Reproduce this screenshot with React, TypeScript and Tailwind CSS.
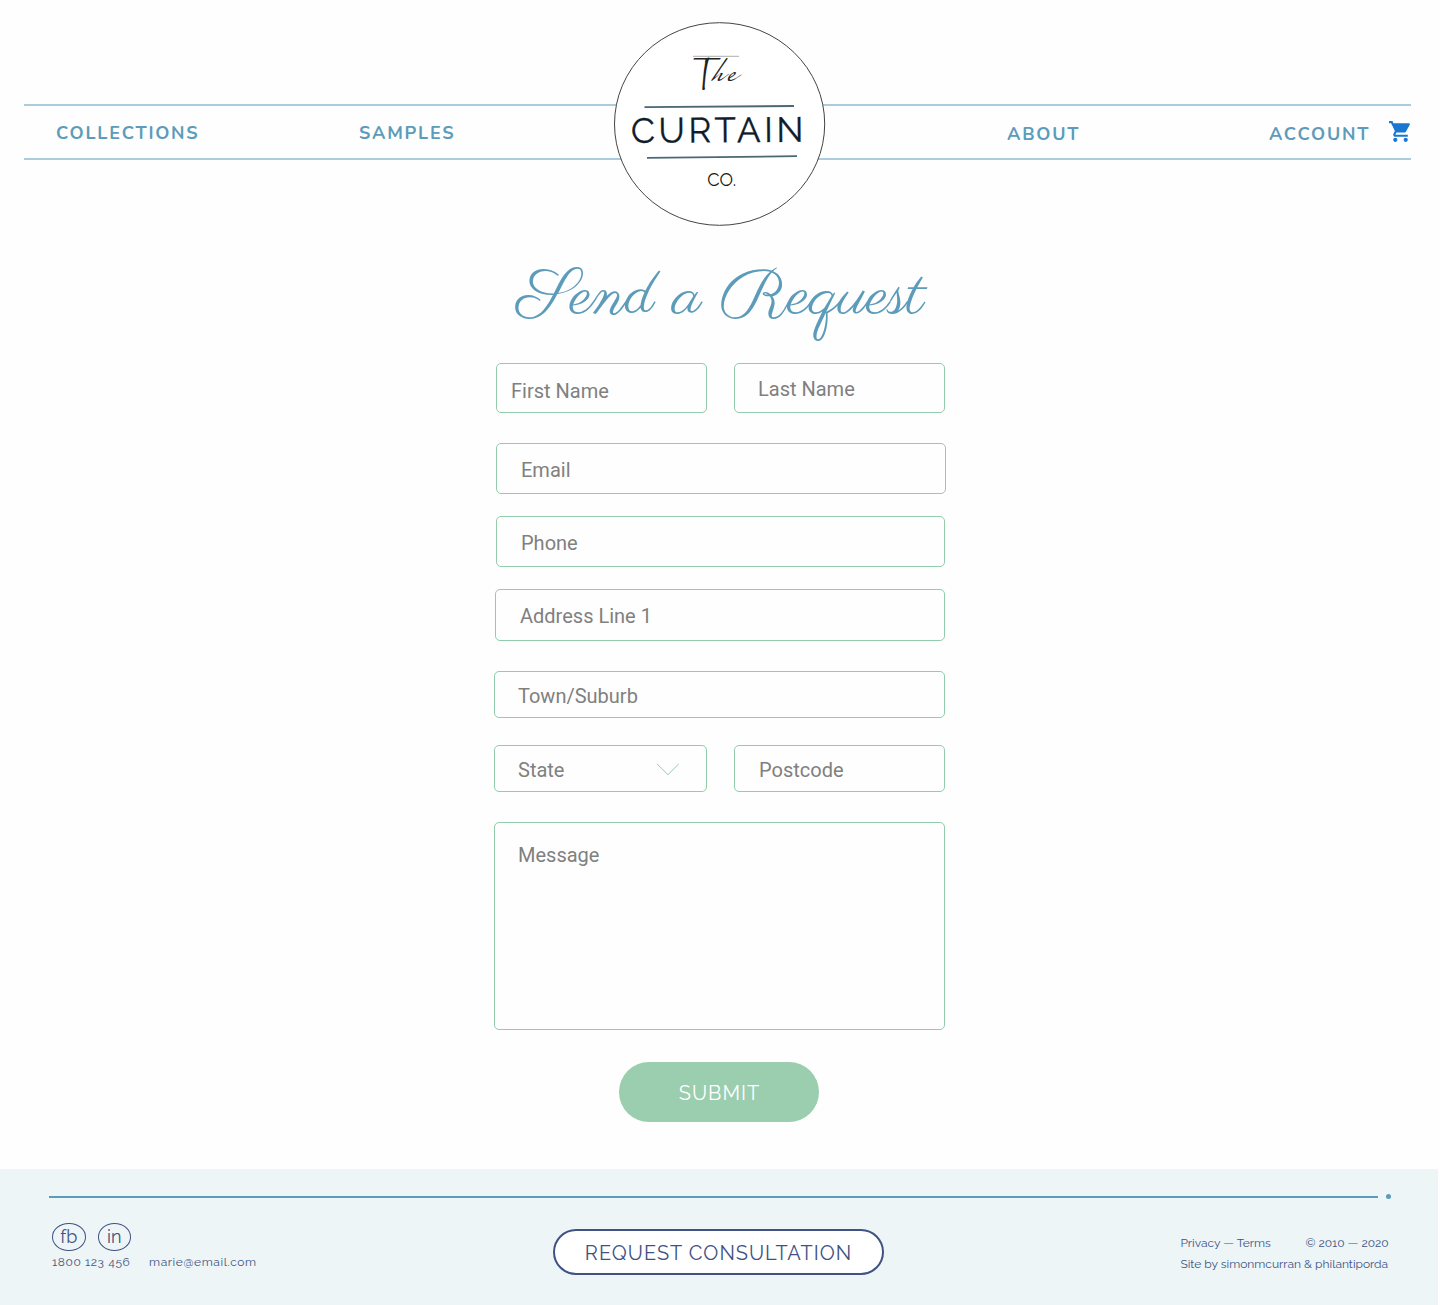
import React from "react";
import { MdShoppingCart } from "react-icons/md";

const fieldBase =
  "block rounded-[5px] border border-[#93ccaa] bg-transparent font-[Roboto,sans-serif] text-[20px] leading-[24px] text-[#808080] placeholder:text-[#808080] placeholder:opacity-100 outline-none";

function Field({ label, className }: { label: string; className: string }) {
  return <input type="text" placeholder={label} aria-label={label} className={`${fieldBase} ${className}`} />;
}

function Logo() {
  return (
    <svg width="214" height="206" viewBox="613 21 214 206" className="absolute left-[613px] top-[21px]">
      <ellipse cx="719.6" cy="124" rx="105.1" ry="101.3" fill="#fff" stroke="#444" strokeWidth="1" />
      <text x="692" y="89.5" fontFamily="Bilbo, Lato, cursive" fontSize="48" fill="#222">
        T
        <tspan x="711" y="80.5" fontFamily="'Mrs Saint Delafield', Lato, cursive" fontSize="40" letterSpacing="2">
          he
        </tspan>
      </text>
      <path d="M693 56.3H739" stroke="#777" strokeWidth="0.6" fill="none" />
      <path d="M644.5 107.2L794 106" stroke="#4b6873" strokeWidth="1.8" fill="none" />
      <path d="M647 157.8L797 156.2" stroke="#4b6873" strokeWidth="1.8" fill="none" />
      <text
        x="631"
        y="142.3"
        transform="rotate(-0.4 717 143)"
        fontFamily="Raleway, Lato, sans-serif"
        fontSize="35"
        fill="#101c2c"
        stroke="#101c2c"
        strokeWidth="0.3"
        textLength="172.5"
        lengthAdjust="spacing"
      >
        CURTAIN
      </text>
      <text x="707.3" y="185.5" fontFamily="Raleway, Lato, sans-serif" fontSize="18" fill="#1a1a1a">
        CO.
      </text>
    </svg>
  );
}

function Header() {
  return (
    <header className="relative h-[250px] pt-[104px]">
      <nav className="ml-6 flex h-14 w-[1387px] items-center border-y-2 border-[#a9cddc] pl-8 font-[Nunito,Lato,sans-serif] text-[18px] leading-[18px] font-bold tracking-[1.75px] text-[#5c9cba]">
        <a className="w-[303px] shrink-0 pt-0.5">COLLECTIONS</a>
        <a className="w-[648px] shrink-0 pt-0.5">SAMPLES</a>
        <a className="w-[262px] shrink-0 pt-1">ABOUT</a>
        <a className="w-[119px] shrink-0 pt-1">ACCOUNT</a>
        <MdShoppingCart className="-mr-2 mb-px -ml-[0.5px] size-[25px] shrink-0 text-[#1976d2]" />
      </nav>
      <Logo />
    </header>
  );
}

function Heading() {
  return (
    <h1 className="h-[113px] pl-[517px] font-['Parisienne','Liberation_Serif',serif] text-[64px] leading-[97px] whitespace-nowrap text-[#5c9cba]">
      Send a Request
    </h1>
  );
}

function RequestForm() {
  return (
    <form className="flex flex-col pl-[494px]">
      <div className="flex gap-[27px] pl-0.5">
        <Field label="First Name" className="h-[50px] w-[211px] pt-[6px] pl-[14px]" />
        <Field label="Last Name" className="h-[50px] w-[211px] pt-[2px] pl-[23px]" />
      </div>
      <Field label="Email" className="mt-[30px] ml-0.5 h-[51px] w-[450px] pt-[3px] pl-[24px]" />
      <Field label="Phone" className="mt-[22px] ml-0.5 h-[51px] w-[449px] pt-[3px] pl-[24px]" />
      <Field label="Address Line 1" className="mt-[22px] ml-px h-[52px] w-[450px] pt-[2px] pl-[24px]" />
      <Field label="Town/Suburb" className="mt-[30px] h-[47px] w-[451px] pt-[3px] pl-[23px]" />
      <div className="mt-[27px] flex gap-[27px]">
        <button type="button" className={`${fieldBase} flex! h-[47px] w-[213px] items-center justify-between pt-[3px] pr-[26px] pl-[23px]`}>
          State
          <svg width="23" height="13" viewBox="0 0 23 13" fill="none" stroke="#93ccaa" className="mb-px">
            <path d="M0.2 1L10.9 11.7L21.7 1" />
          </svg>
        </button>
        <Field label="Postcode" className="h-[47px] w-[211px] pt-[3px] pl-[24px]" />
      </div>
      <textarea
        placeholder="Message"
        aria-label="Message"
        className={`${fieldBase} mt-[30px] h-[208px] w-[451px] resize-none pt-[20px] pl-[23px]`}
      />
      <button
        type="button"
        className="mt-8 ml-[125px] h-[60px] w-[200px] rounded-full bg-[#9bcdaf] pt-[2px] pl-px font-[Raleway,Lato,sans-serif] text-[20px] leading-[24px] tracking-[1px] text-white"
      >
        SUBMIT
      </button>
    </form>
  );
}

function Social({ label }: { label: string }) {
  return (
    <a className="flex h-[28px] w-[33.5px] items-center justify-center rounded-[50%] border border-[#3f5283] pb-px text-[18px] leading-none">
      {label}
    </a>
  );
}

function Footer() {
  return (
    <footer className="mt-[47px] h-[136px] w-[1438px] bg-[#edf5f7] font-[Raleway,Lato,sans-serif] text-[12px] leading-[14px] text-[#3f5283]">
      <div className="flex items-center pt-[25px] pl-[49px]">
        <div className="h-0.5 w-[1329px] bg-[#5c9cba]" />
        <div className="ml-[8px] size-[5px] rounded-full bg-[#5c9cba]" />
      </div>
      <div className="flex">
        <div className="w-[553px] pt-[24px] pl-[52px]">
          <div className="flex gap-[12px]">
            <Social label="fb" />
            <Social label="in" />
          </div>
          <div className="mt-1 flex tracking-[0.6px]">
            <span className="w-[97px]">1800 123 456</span>
            <span>marie@email.com</span>
          </div>
        </div>
        <button
          type="button"
          className="mt-[30px] h-[46px] w-[331px] rounded-full border-2 border-[#3f5283] bg-white pt-[1px] text-[20px] leading-[24px] tracking-[1px]"
        >
          REQUEST CONSULTATION
        </button>
        <div className="pt-[37px] pl-[296.4px]">
          <div className="flex">
            <span className="w-[125px]">Privacy — Terms</span>
            <span>© 2010 — 2020</span>
          </div>
          <p className="mt-[7px]">Site by simonmcurran &amp; philantiporda</p>
        </div>
      </div>
    </footer>
  );
}

export default function App() {
  return (
    <div className="min-h-[1305px] w-[1440px] bg-[#fefefe]">
      <Header />
      <Heading />
      <RequestForm />
      <Footer />
    </div>
  );
}
